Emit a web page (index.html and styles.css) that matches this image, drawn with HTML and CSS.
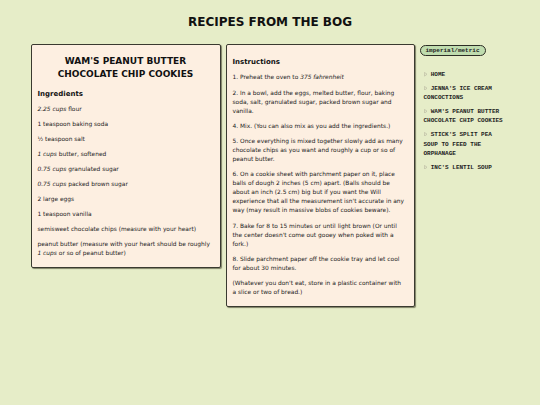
FILE: index.html
```html
<!DOCTYPE html>
<html lang="en">
<head>
<meta charset="utf-8">
<title>Recipes from the Bog</title>
<link rel="stylesheet" href="styles.css">
</head>
<body>
<h1 class="site-title">RECIPES FROM THE BOG</h1>
<div class="layout">
  <section class="card card-ingredients">
    <h2 class="recipe-title">WAM'S PEANUT BUTTER CHOCOLATE CHIP COOKIES</h2>
    <h3 class="section-title section-title-first">Ingredients</h3>
    <p><em>2.25 cups</em> flour</p>
    <p>1 teaspoon baking soda</p>
    <p>½ teaspoon salt</p>
    <p><em>1 cups</em> butter, softened</p>
    <p><em>0.75 cups</em> granulated sugar</p>
    <p><em>0.75 cups</em> packed brown sugar</p>
    <p>2 large eggs</p>
    <p>1 teaspoon vanilla</p>
    <p>semisweet chocolate chips (measure with your heart)</p>
    <p>peanut butter (measure with your heart should be roughly <em>1 cups</em> or so of peanut butter)</p>
  </section>
  <section class="card card-instructions">
    <h3 class="section-title section-title-top">Instructions</h3>
    <p>1. Preheat the oven to <em>375 fahrenheit</em></p>
    <p>2. In a bowl, add the eggs, melted butter, flour, baking soda, salt, granulated sugar, packed brown sugar and vanilla.</p>
    <p>4. Mix. (You can also mix as you add the ingredients.)</p>
    <p>5. Once everything is mixed together slowly add as many chocolate chips as you want and roughly a cup or so of peanut butter.</p>
    <p>6. On a cookie sheet with parchment paper on it, place balls of dough 2 inches (5 cm) apart. (Balls should be about an inch (2.5 cm) big but if you want the Will experience that all the measurement isn't accurate in any way (may result in massive blobs of cookies beware).</p>
    <p>7. Bake for 8 to 15 minutes or until light brown (Or until the center doesn't come out gooey when poked with a fork.)</p>
    <p>8. Slide parchment paper off the cookie tray and let cool for about 30 minutes.</p>
    <p>(Whatever you don't eat, store in a plastic container with a slice or two of bread.)</p>
  </section>
  <aside class="sidebar">
    <button class="unit-toggle" type="button">imperial/metric</button>
    <ul class="nav">
      <li><svg class="bullet" viewBox="0 0 4 5" aria-hidden="true"><path d="M0.5 0.5 L3.5 2.5 L0.5 4.5 Z"/></svg><a href="#">HOME</a></li>
      <li><svg class="bullet" viewBox="0 0 4 5" aria-hidden="true"><path d="M0.5 0.5 L3.5 2.5 L0.5 4.5 Z"/></svg><a href="#">JENNA'S ICE CREAM CONCOCTIONS</a></li>
      <li><svg class="bullet" viewBox="0 0 4 5" aria-hidden="true"><path d="M0.5 0.5 L3.5 2.5 L0.5 4.5 Z"/></svg><a href="#">WAM'S PEANUT BUTTER CHOCOLATE CHIP COOKIES</a></li>
      <li><svg class="bullet" viewBox="0 0 4 5" aria-hidden="true"><path d="M0.5 0.5 L3.5 2.5 L0.5 4.5 Z"/></svg><a href="#">STICK'S SPLIT PEA SOUP TO FEED THE ORPHANAGE</a></li>
      <li><svg class="bullet" viewBox="0 0 4 5" aria-hidden="true"><path d="M0.5 0.5 L3.5 2.5 L0.5 4.5 Z"/></svg><a href="#">INC'S LENTIL SOUP</a></li>
    </ul>
  </aside>
</div>
</body>
</html>
```
FILE: styles.css
```css
html, body {
  margin: 0;
  padding: 0;
}
body {
  background: #e6edc8;
  font-family: "DejaVu Sans", Verdana, sans-serif;
  font-size: 5.9px;
  color: #222;
  width: 540px;
  height: 405px;
  overflow: hidden;
}
.site-title {
  margin: 15px 0 15px;
  font-size: 12px;
  line-height: 14px;
  text-align: center;
  color: #111;
}
.layout {
  width: 479px;
  margin: 0 auto;
  display: grid;
  grid-template-columns: 190px 189px 1fr;
  column-gap: 5px;
  align-items: start;
}
.card {
  background: #fdefe1;
  border: 1px solid #3a3a30;
  border-radius: 2px;
  box-shadow: 1px 1px 1px rgba(40, 40, 20, 0.55);
}
.card p {
  line-height: 9px;
}
.card-ingredients {
  padding: 9px 6px 3.5px;
}
.card-ingredients p {
  margin: 6px 0;
}
.card-instructions {
  padding: 9px 7px 3px 6px;
}
.card-instructions p {
  margin: 6.25px 0;
}
.recipe-title {
  margin: 1px 0 0;
  font-size: 9px;
  line-height: 13px;
  text-align: center;
  color: #111;
}
.section-title {
  font-size: 7px;
  line-height: 10px;
  margin: 0;
  color: #111;
}
.section-title-first {
  margin-top: 7.5px;
}
.section-title-top {
  margin-top: 3px;
}
.sidebar {
  padding-top: 1px;
}
.unit-toggle {
  font-family: "Liberation Mono", "Courier New", monospace;
  font-weight: bold;
  font-size: 6px;
  line-height: 7px;
  padding: 1px 5px;
  border: 1px solid #2d2d25;
  border-radius: 6px;
  background: #bfdcae;
  color: #222;
  margin: 0;
  display: block;
}
.nav {
  list-style: none;
  margin: 14px 0 0;
  padding: 0 0 0 4px;
  width: 82px;
  font-family: "Liberation Mono", "Courier New", monospace;
  font-weight: bold;
  font-size: 6px;
  line-height: 9.6px;
}
.nav li {
  margin: 0 0 4px;
}
.nav a {
  color: #222;
  text-decoration: none;
}
.bullet {
  width: 3.6px;
  height: 4.5px;
  margin: 0 3.6px 0 0;
  vertical-align: -0.5px;
  fill: none;
  stroke: #b8b6a0;
  stroke-width: 0.7;
}
```
